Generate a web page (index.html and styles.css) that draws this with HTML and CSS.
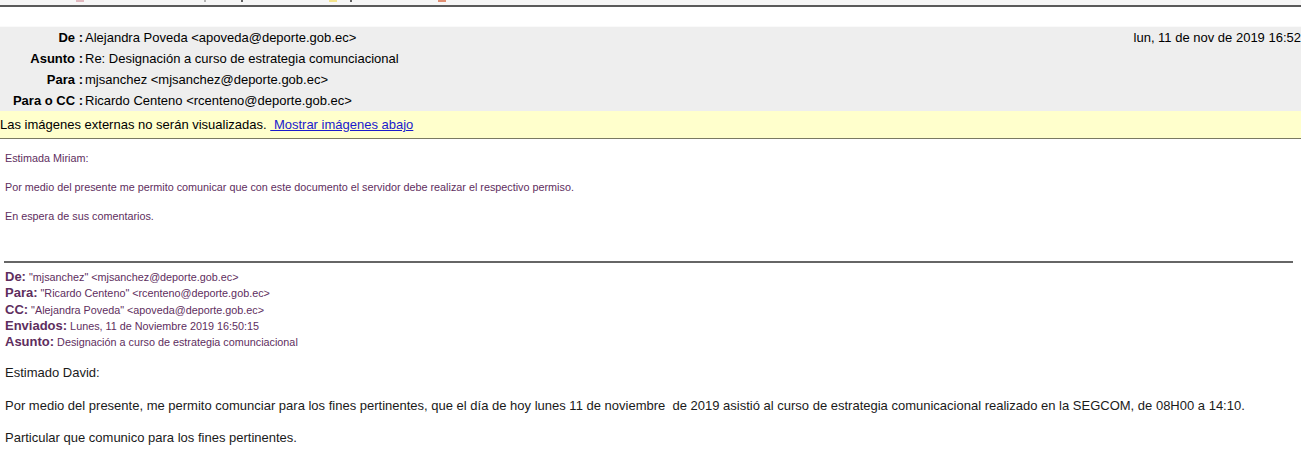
FILE: index.html
```html
<!DOCTYPE html>
<html lang="es">
<head>
<meta charset="utf-8">
<link rel="stylesheet" href="styles.css">
<title>Mensaje</title>
</head>
<body>
<div class="toolbar">
  <span class="tb-dot tb-pink" style="left:76px"></span>
  <span class="tb-dot tb-gray" style="left:204px"></span>
  <span class="tb-dot tb-dark" style="left:241px"></span>
  <span class="tb-dot tb-yellow" style="left:329px"></span>
  <span class="tb-dot tb-dark" style="left:350px"></span>
  <span class="tb-dot tb-orange" style="left:438px"></span>
</div>
<div class="spacer"></div>
<div class="headers">
  <div class="hrow">
    <div class="hlabel">De :</div>
    <div class="hvalue">Alejandra Poveda &lt;apoveda@deporte.gob.ec&gt;</div>
    <div class="hdate">lun, 11 de nov de 2019 16:52</div>
  </div>
  <div class="hrow">
    <div class="hlabel">Asunto :</div>
    <div class="hvalue">Re: Designación a curso de estrategia comunciacional</div>
  </div>
  <div class="hrow">
    <div class="hlabel">Para :</div>
    <div class="hvalue">mjsanchez &lt;mjsanchez@deporte.gob.ec&gt;</div>
  </div>
  <div class="hrow">
    <div class="hlabel">Para o CC :</div>
    <div class="hvalue">Ricardo Centeno &lt;rcenteno@deporte.gob.ec&gt;</div>
  </div>
</div>
<div class="notice">Las imágenes externas no serán visualizadas. <a href="#" class="notice-link">&nbsp;Mostrar imágenes abajo</a></div>
<div class="message">
  <p class="reply">Estimada Miriam:</p>
  <p class="reply">Por medio del presente me permito comunicar que con este documento el servidor debe realizar el respectivo permiso.</p>
  <p class="reply">En espera de sus comentarios.</p>
  <hr class="sep">
  <div class="quote-head">
    <div><b>De:</b> "mjsanchez" &lt;mjsanchez@deporte.gob.ec&gt;</div>
    <div><b>Para:</b> "Ricardo Centeno" &lt;rcenteno@deporte.gob.ec&gt;</div>
    <div><b>CC:</b> "Alejandra Poveda" &lt;apoveda@deporte.gob.ec&gt;</div>
    <div><b>Enviados:</b> Lunes, 11 de Noviembre 2019 16:50:15</div>
    <div><b>Asunto:</b> Designación a curso de estrategia comunciacional</div>
  </div>
  <div class="quoted">
    <p>Estimado David:</p>
    <p>Por medio del presente, me permito comunciar para los fines pertinentes, que el día de hoy lunes 11 de noviembre&nbsp; de 2019 asistió al curso de estrategia comunicacional realizado en la SEGCOM, de 08H00 a 14:10.</p>
    <p>Particular que comunico para los fines pertinentes.</p>
  </div>
</div>
</body>
</html>
```
FILE: styles.css
```css
html, body {
  margin: 0;
  padding: 0;
  background: #ffffff;
  font-family: "Liberation Sans", Arial, sans-serif;
  color: #000;
  overflow: hidden;
}

.toolbar {
  position: relative;
  height: 5px;
  background: #f6f6f6;
  border-bottom: 2px solid #5a5a5a;
}
.tb-dot {
  position: absolute;
  top: 0;
  width: 8px;
  height: 2px;
  opacity: 0.7;
}
.tb-pink { background: #d8a0a8; }
.tb-gray { background: #999; width: 2px; }
.tb-dark { background: #222; width: 2px; }
.tb-yellow { background: #f2dc60; }
.tb-orange { background: #d8643c; }

.spacer {
  height: 19px;
  border-bottom: 1px solid #fafafa;
}

.headers {
  background: #eeeeee;
  font-size: 13px;
  color: #000;
}
.hrow {
  display: flex;
  height: 21px;
  line-height: 21px;
}
.hlabel {
  width: 83px;
  text-align: right;
  font-weight: bold;
  flex: none;
  padding-right: 2px;
}
.hvalue {
  flex: 1;
  white-space: nowrap;
}
.hdate {
  flex: none;
  text-align: right;
}

.notice {
  background: #ffffcc;
  height: 27px;
  line-height: 27px;
  font-size: 13px;
  border-bottom: 1px solid #7a7a62;
  white-space: nowrap;
}
.notice-link {
  color: #1a1acc;
  text-decoration: underline;
}

.message {
  padding: 12px 8px 0 5px;
}
.reply {
  margin: 0 0 15px 0;
  font-size: 10.8px;
  line-height: 14px;
  color: #5e2e5e;
}
.sep {
  margin: 38px 0 6px -1px;
  border: 0;
  height: 2px;
  background: #666666;
}
.quote-head {
  font-size: 10.8px;
  line-height: 16.25px;
  color: #5e2e5e;
}
.quote-head b {
  font-size: 13px;
  color: #5e2e5e;
}
.quoted {
  padding-top: 15px;
  font-size: 13px;
  color: #1a1a1a;
}
.quoted p {
  margin: 0 0 16.5px 0;
  line-height: 16px;
}
```
